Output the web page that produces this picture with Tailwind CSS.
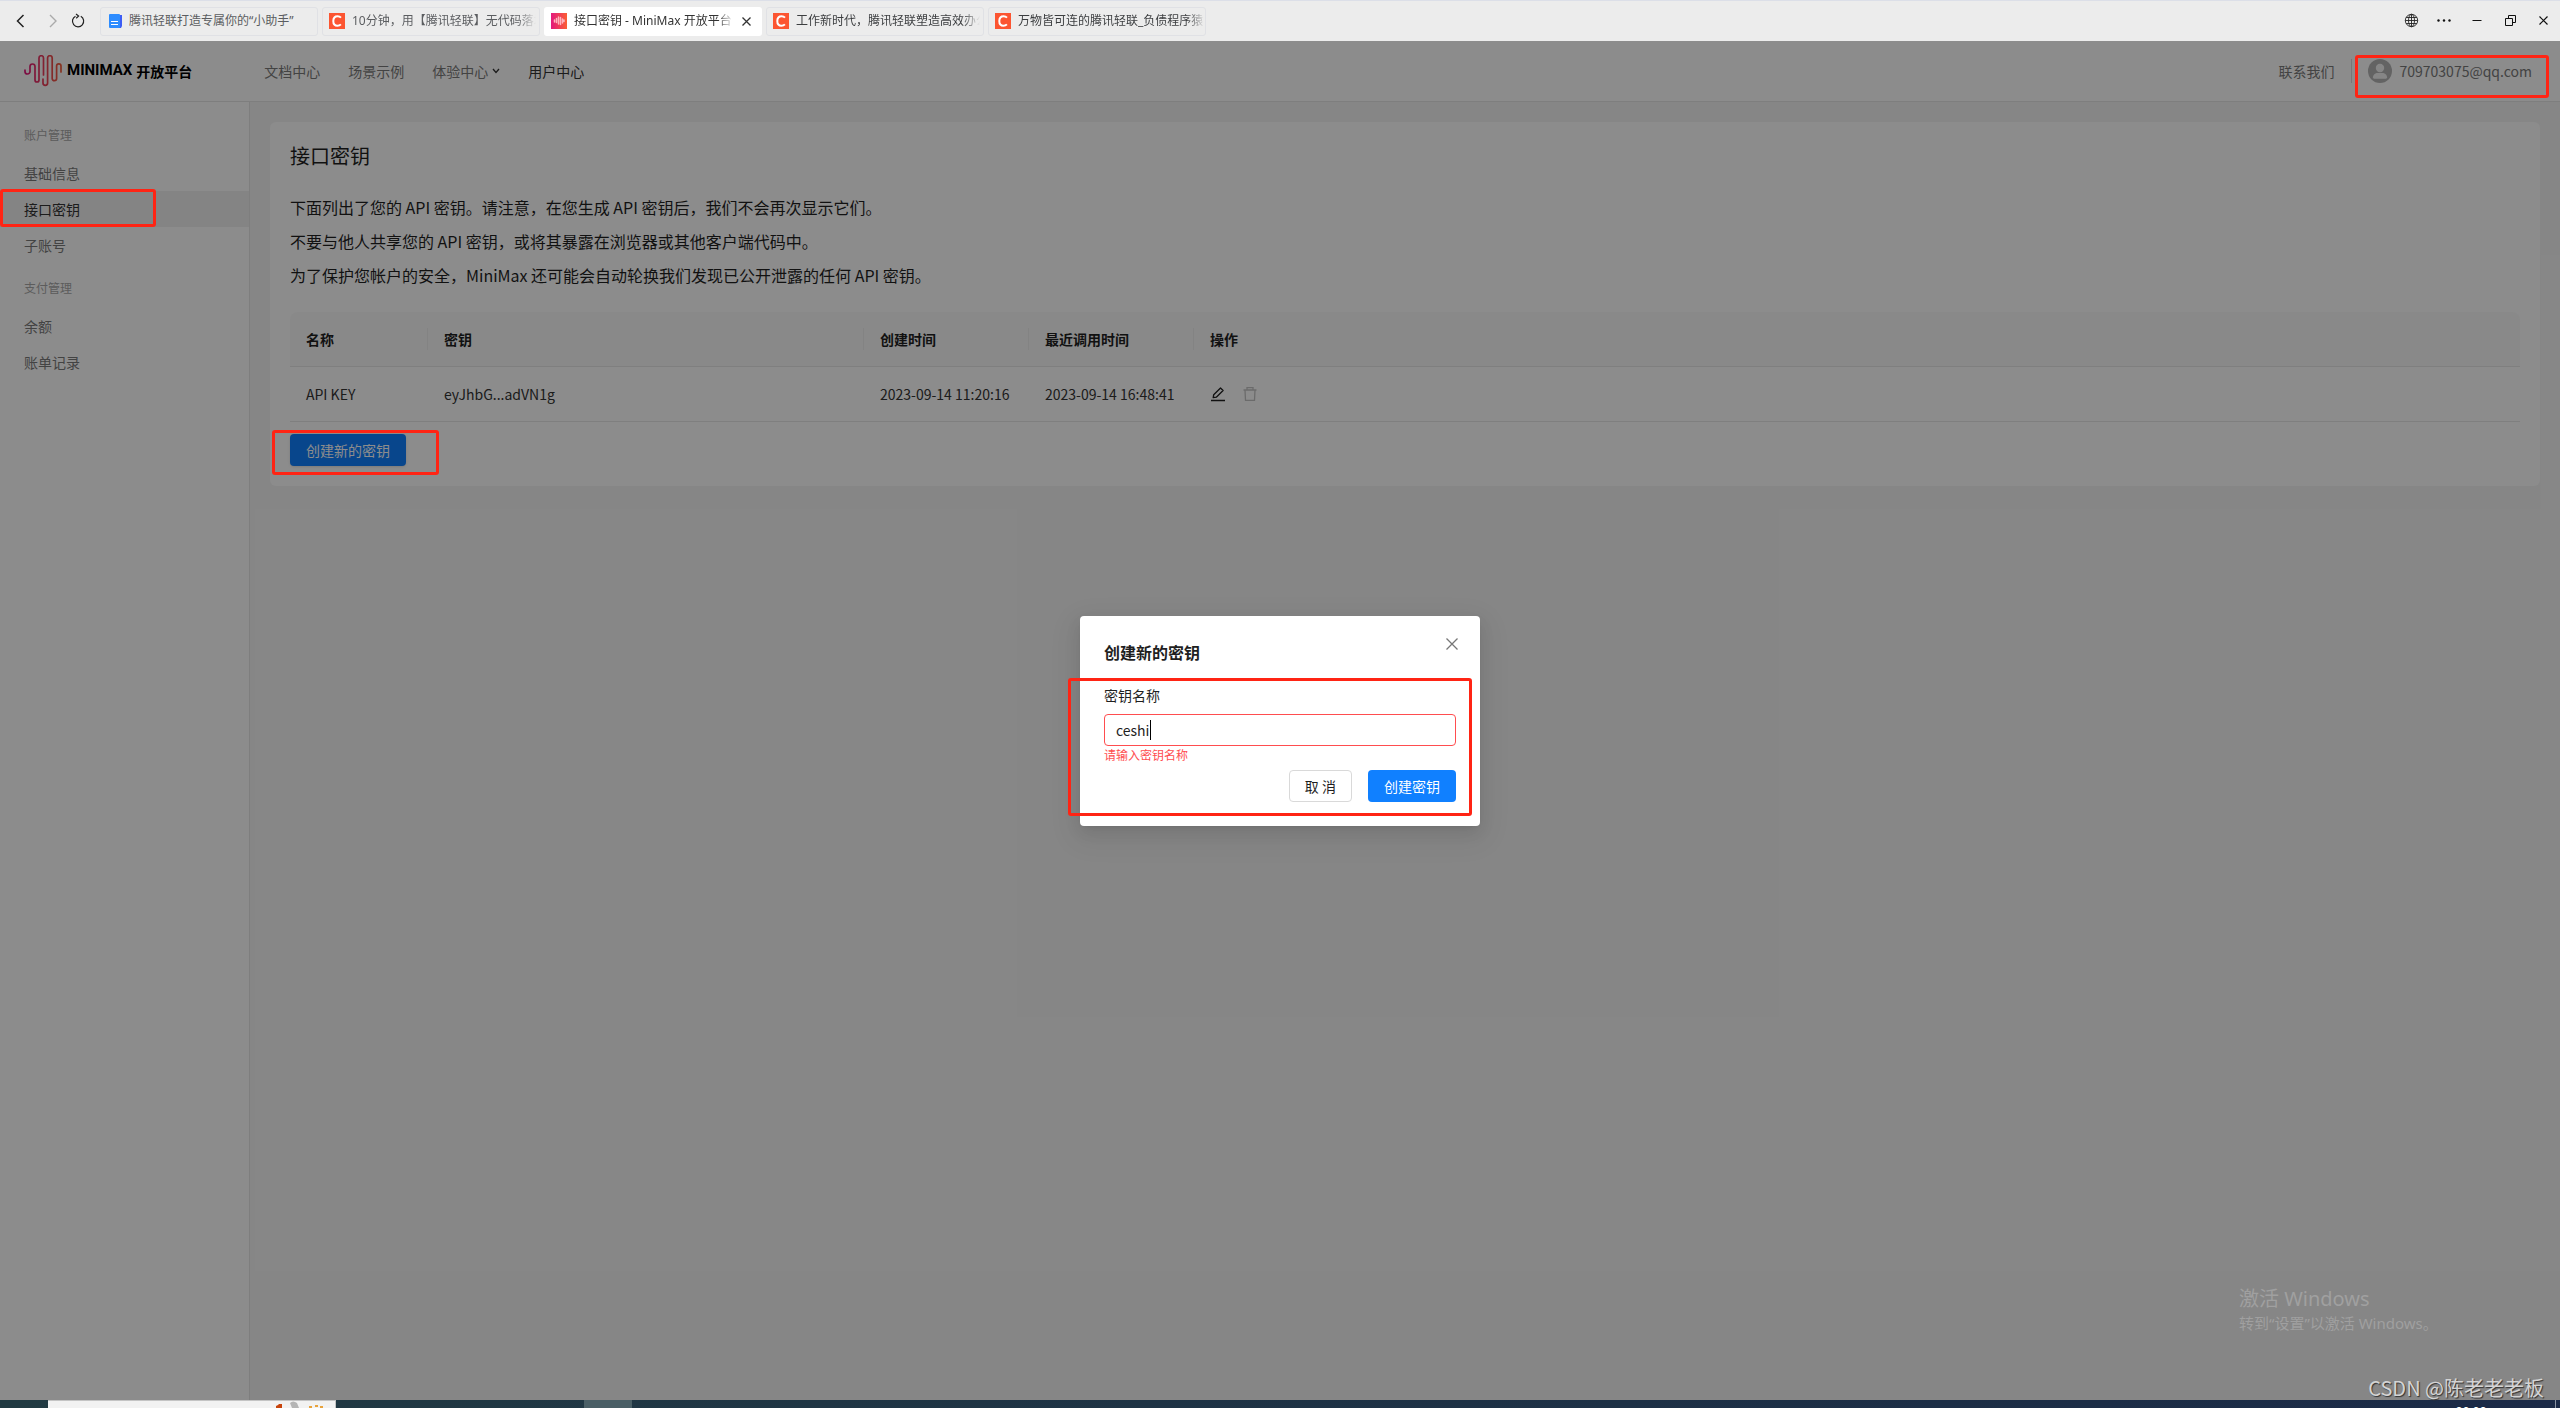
<!DOCTYPE html>
<html lang="zh-CN">
<head>
<meta charset="utf-8">
<meta name="viewport" content="width=device-width, initial-scale=1">
<title>接口密钥 - MiniMax 开放平台</title>
<script src="https://cdn.jsdelivr.net/npm/@tailwindcss/browser@4"></script>
</head>
<body class="relative flex h-screen flex-col overflow-hidden bg-white font-['Noto_Sans_CJK_SC',sans-serif] text-sm text-[#1f1f1f]">

<svg class="hidden">
  <symbol id="csdn" viewBox="0 0 16 16"><rect width="16" height="16" fill="#fc5531"/><path d="M12 4.6C11 3.6 10 3.2 8.7 3.2 6 3.2 4.3 5.2 4.3 8s1.500 4.800 4.200 4.800c1.400 0 2.500-.5 3.400-1.400" fill="none" stroke="#fff" stroke-width="2"/></symbol>
</svg>

<!-- Browser bar -->
<div class="flex h-[41px] shrink-0 items-center border-t border-[#dcdfe8] bg-[#ececec]">
  <div class="flex w-[100px] shrink-0 items-center pl-3">
    <button aria-label="后退" class="h-4 w-4"><svg viewBox="0 0 16 16" fill="none" stroke="#222" stroke-width="1.500"><path d="M11.500 2 5.500 8l6 6"/></svg></button>
    <button aria-label="前进" class="ml-4 h-4 w-4"><svg viewBox="0 0 16 16" fill="none" stroke="#aaa" stroke-width="1.400"><path d="m6 2 6 6-6 6"/></svg></button>
    <button aria-label="刷新" class="ml-2.5 h-4 w-4"><svg viewBox="0 0 16 16" fill="none" stroke="#222" stroke-width="1.200"><path d="M5.500 3.200a5.600 5.600 0 1 0 5.300.1"/><path d="M6 1l2.600 2L6.200 5.200" /></svg></button>
  </div>
  <div class="flex gap-1 font-['Noto_Sans','Noto_Sans_CJK_SC',sans-serif] text-xs">
    <a href="#" class="flex h-[29px] w-[218px] items-center rounded-[3px] border border-[#e0e1e5] pl-[7px] text-[#5b5d60]">
      <svg class="h-[15px] w-[15px] shrink-0" viewBox="0 0 15 15"><path d="M3 1h11v11l-1 2H4z" fill="#3d5df5"/><rect x="1" y="0" width="11" height="14" rx="1" fill="#2d8cff"/><path d="M3 7.500h7M3 10.500h7" stroke="#fff"/></svg>
      <span class="ml-1.5 w-[180px] overflow-hidden whitespace-nowrap">腾讯轻联打造专属你的“小助手”</span>
    </a>
    <a href="#" class="flex h-[29px] w-[218px] items-center rounded-[3px] border border-[#e0e1e5] pl-1.5 text-[#5b5d60]">
      <svg class="h-4 w-4 shrink-0"><use href="#csdn"/></svg>
      <span class="ml-[7px] w-[184px] overflow-hidden whitespace-nowrap mask-r-from-90%">10分钟，用【腾讯轻联】无代码落地</span>
    </a>
    <a href="#" class="flex h-[29px] w-[218px] items-center rounded-[3px] bg-white pl-[7px] text-[#333]">
      <svg class="h-4 w-4 shrink-0" viewBox="0 0 16 16"><defs><linearGradient id="g1"><stop stop-color="#e3197d"/><stop offset="1" stop-color="#fb5f35"/></linearGradient></defs><rect width="16" height="16" fill="url(#g1)"/><path d="M3.500 7v2M5.500 5.500v4M7.500 4v7M9.500 4.500v7M11.500 6v4M13 7v1.500" stroke="#ffb3bd" stroke-width="1.500" stroke-linecap="round"/></svg>
      <span class="ml-[7px] w-[160px] overflow-hidden whitespace-nowrap mask-r-from-90%">接口密钥 - MiniMax 开放平台</span>
      <svg class="ml-2 h-[9px] w-[9px]" viewBox="0 0 9 9" stroke="#333" stroke-width="1.300"><path d="m.5.5 8 8m0-8-8 8"/></svg>
    </a>
    <a href="#" class="flex h-[29px] w-[218px] items-center rounded-[3px] border border-[#e0e1e5] pl-1.5 text-[#3c3e40]">
      <svg class="h-4 w-4 shrink-0"><use href="#csdn"/></svg>
      <span class="ml-[7px] w-[184px] overflow-hidden whitespace-nowrap mask-r-from-90%">工作新时代，腾讯轻联塑造高效办公</span>
    </a>
    <a href="#" class="flex h-[29px] w-[218px] items-center rounded-[3px] border border-[#e0e1e5] pl-1.5 text-[#3c3e40]">
      <svg class="h-4 w-4 shrink-0"><use href="#csdn"/></svg>
      <span class="ml-[7px] w-[187px] overflow-hidden whitespace-nowrap mask-r-from-90%">万物皆可连的腾讯轻联_负债程序猿</span>
    </a>
  </div>
  <div class="ml-auto flex items-center gap-[17px] pr-[9px]">
    <button aria-label="网络" class="h-4 w-4"><svg viewBox="0 0 16 16" fill="none" stroke="#222" stroke-width=".9"><circle cx="8.500" cy="7.500" r="6.200"/><ellipse cx="8.500" cy="7.500" rx="3" ry="6.200"/><path d="M8.500 1.300v12.400M2.300 7.500h12.400M3.200 4.500h10.600M3.200 10.500h10.600"/></svg></button>
    <button aria-label="更多" class="h-4 w-4"><svg viewBox="0 0 16 16" fill="#111"><circle cx="2.500" cy="7.500" r="1.200"/><circle cx="8" cy="7.500" r="1.200"/><circle cx="13.500" cy="7.500" r="1.200"/></svg></button>
    <button aria-label="最小化" class="h-4 w-4"><svg viewBox="0 0 16 16" stroke="#111"><path d="M3.500 7.500h9"/></svg></button>
    <button aria-label="还原" class="h-4 w-4"><svg viewBox="0 0 16 16" fill="none" stroke="#111"><path d="M3.500 5.500h7v7h-7zM6.500 5.500v-3h7v7h-3"/></svg></button>
    <button aria-label="关闭" class="h-4 w-4"><svg viewBox="0 0 16 16" stroke="#111" stroke-width="1.200"><path d="m4.500 3.500 8 8m0-8-8 8"/></svg></button>
  </div>
</div>

<!-- Application -->
<div class="relative flex min-h-0 flex-1 flex-col">
  <header class="flex h-[61px] shrink-0 items-center border-b border-[#e5e5e5] bg-white pl-6 text-[#7a7a7a]">
    <a href="#" class="flex items-center text-black">
      <svg class="h-8 w-[38px]" viewBox="0 0 38 32" fill="none" stroke="url(#g2)" stroke-width="1.700" stroke-linecap="round"><defs><linearGradient id="g2" x1="0" y1="0" x2="38" y2="0" gradientUnits="userSpaceOnUse"><stop stop-color="#e2167e"/><stop offset="1" stop-color="#f4603b"/></linearGradient></defs><path d="M1 15v1.500a2.500 2.500 0 0 0 5 0V11.500a2.500 2.500 0 0 1 5 0V25a2 2 0 0 0 4 0V3a2 2 0 0 1 4.500 0V20"/><path d="M19 24v4a2.300 2.300 0 0 0 4.600 0V3a2.200 2.200 0 0 1 4.600 0V23.500a2.200 2.200 0 0 0 4.400 0V11a2.200 2.200 0 0 1 4.400 0v6"/></svg>
      <span class="ml-[5px] font-[Roboto,sans-serif] text-[15px] font-bold">MINIMAX</span>
      <span class="ml-1 font-bold">开放平台</span>
    </a>
    <nav class="ml-[72px] flex items-center gap-7">
      <a href="#">文档中心</a>
      <a href="#">场景示例</a>
      <a href="#" class="flex items-center gap-1">体验中心<svg class="h-2 w-2" viewBox="0 0 8 8" fill="none" stroke="#333" stroke-width="1.300"><path d="m1 2 3 3.500L7 2"/></svg></a>
      <a href="#" class="text-[#333]">用户中心</a>
    </nav>
    <div class="ml-auto flex items-center pr-7">
      <a href="#">联系我们</a>
      <span class="ml-4 h-6 w-px bg-[#d9d9d9]"></span>
      <a href="#" class="ml-4 flex items-center gap-2">
        <svg class="h-6 w-6" viewBox="0 0 24 24"><circle cx="12" cy="12" r="12" fill="#b5b5b5"/><circle cx="12" cy="9" r="4.200" fill="#f5f5f5"/><path d="M4.800 18.500c.6-3.500 3-4.500 4.700-4.500h5c1.700 0 4.100 1 4.700 4.500-.4.900-1 1.200-2 1.200H6.800c-1 0-1.600-.3-2-1.200z" fill="#f5f5f5"/></svg>
        709703075@qq.com
      </a>
    </div>
  </header>

  <div class="flex min-h-0 flex-1">
    <aside class="w-[250px] shrink-0 border-r border-[#e5e5e5] bg-white pt-2 text-[#7a7a7a]">
      <h2 class="flex h-[45px] items-center pt-1 pl-6 text-xs text-[#a8a8a8]">账户管理</h2>
      <a href="#" class="flex h-9 items-center pl-6">基础信息</a>
      <a href="#" aria-current="page" class="flex h-9 items-center bg-[#f0f0f0] pl-6 text-[#333]">接口密钥</a>
      <a href="#" class="flex h-9 items-center pl-6">子账号</a>
      <h2 class="flex h-[45px] items-center pt-1 pl-6 text-xs text-[#a8a8a8]">支付管理</h2>
      <a href="#" class="flex h-9 items-center pl-6">余额</a>
      <a href="#" class="flex h-9 items-center pl-6">账单记录</a>
    </aside>

    <main class="min-w-0 flex-1 bg-[#f5f5f5] p-5">
      <section class="rounded-md bg-white p-5">
        <h1 class="text-xl leading-7">接口密钥</h1>
        <div class="my-5 text-base leading-[34px]">
          <p>下面列出了您的 API 密钥。请注意，在您生成 API 密钥后，我们不会再次显示它们。</p>
          <p>不要与他人共享您的 API 密钥，或将其暴露在浏览器或其他客户端代码中。</p>
          <p>为了保护您帐户的安全，MiniMax 还可能会自动轮换我们发现已公开泄露的任何 API 密钥。</p>
        </div>
        <table class="w-full table-fixed border-separate border-spacing-0 text-left leading-[22px]">
          <colgroup><col class="w-[138px]"><col class="w-[436px]"><col class="w-[165px]"><col class="w-[165px]"><col></colgroup>
          <thead class="bg-[#fafafa]">
            <tr>
              <th class="rounded-tl-lg border-b border-[#e8e8e8] py-4 pl-4"><div class="border-r border-[#eee]">名称</div></th>
              <th class="border-b border-[#e8e8e8] py-4 pl-4"><div class="border-r border-[#eee]">密钥</div></th>
              <th class="border-b border-[#e8e8e8] py-4 pl-4"><div class="border-r border-[#eee]">创建时间</div></th>
              <th class="border-b border-[#e8e8e8] py-4 pl-4"><div class="border-r border-[#eee]">最近调用时间</div></th>
              <th class="rounded-tr-lg border-b border-[#e8e8e8] py-4 pl-4">操作</th>
            </tr>
          </thead>
          <tbody class="text-[#333]">
            <tr>
              <td class="border-b border-[#e8e8e8] py-4 pl-4">API KEY</td>
              <td class="border-b border-[#e8e8e8] py-4 pl-4">eyJhbG...adVN1g</td>
              <td class="border-b border-[#e8e8e8] py-4 pl-4">2023-09-14 11:20:16</td>
              <td class="border-b border-[#e8e8e8] py-4 pl-4">2023-09-14 16:48:41</td>
              <td class="border-b border-[#e8e8e8] py-4 pl-4">
                <div class="flex h-[22px] items-center gap-4">
                  <button aria-label="编辑" class="h-4 w-4"><svg viewBox="0 0 16 16" fill="none" stroke="#1f1f1f" stroke-width="1.300"><path d="M1 14.500h14" stroke-width="1.500"/><path d="m3.200 11.700.5-3L10.500 2l2.600 2.500-6.800 6.700z" stroke-linejoin="round"/></svg></button>
                  <button aria-label="删除" class="h-4 w-4"><svg viewBox="0 0 16 16" fill="none" stroke="#c4c4c4" stroke-width="1.300"><path d="M1.500 4h13M3 4l.5 10.400h9L13 4M5 4V1.600h6V4"/></svg></button>
                </div>
              </td>
            </tr>
          </tbody>
        </table>
        <button class="mt-3 block h-8 rounded bg-[#1080ff] px-4 text-white shadow-sm">创建新的密钥</button>
      </section>
    </main>
  </div>

  <!-- Dialog -->
  <div class="absolute inset-0 flex items-center justify-center bg-black/45">
    <form role="dialog" aria-labelledby="dlg-title" class="relative w-[400px] rounded bg-white p-6 shadow-[0_6px_16px_rgba(0,0,0,0.08),0_9px_28px_8px_rgba(0,0,0,0.05),0_3px_6px_-4px_rgba(0,0,0,0.12)]">
      <button type="button" aria-label="关闭" class="absolute top-[22px] right-[22px] h-3 w-3"><svg viewBox="0 0 12 12" stroke="#777" stroke-width="1.300"><path d="m.5.500 11 11m0-11-11 11"/></svg></button>
      <h2 id="dlg-title" class="text-base leading-6 font-bold">创建新的密钥</h2>
      <label for="key-name" class="mt-5 block leading-[22px]">密钥名称</label>
      <div class="relative mt-2">
        <input id="key-name" type="text" value="ceshi" class="block h-8 w-full rounded border border-[#ff4d4f] bg-white px-[11px] outline-none">
        <span class="absolute top-1.5 left-[46px] h-5 w-px bg-black"></span>
      </div>
      <p class="text-xs leading-[18px] text-[#ff4d4f]">请输入密钥名称</p>
      <div class="mt-1.5 flex justify-end gap-4">
        <button type="button" class="h-8 rounded border border-[#d9d9d9] bg-white px-[15px]">取 消</button>
        <button type="submit" class="h-8 rounded bg-[#1080ff] px-4 text-white">创建密钥</button>
      </div>
      <span class="pointer-events-none absolute top-[62px] right-2 -left-3 h-[138px] rounded-[3px] border-3 border-[#ff2414]"></span>
    </form>
  </div>

  <!-- Highlight marks -->
  <span class="pointer-events-none absolute top-[14px] right-[11px] h-[43px] w-[194px] rounded-[3px] border-3 border-[#ff2414]"></span>
  <span class="pointer-events-none absolute top-[148px] left-0 h-[38px] w-[156px] rounded-[3px] border-3 border-[#ff2414]"></span>
  <span class="pointer-events-none absolute top-[389px] left-[272px] h-[45px] w-[167px] rounded-[3px] border-3 border-[#ff2414]"></span>

  <!-- Watermarks -->
  <div class="absolute right-[122px] bottom-[67px] w-[199px] font-['Noto_Sans','Noto_Sans_CJK_SC',sans-serif] whitespace-nowrap text-[#a0a0a0]">
    <p class="text-xl leading-7">激活 Windows</p>
    <p class="text-[15px] leading-5">转到“设置”以激活 Windows。</p>
  </div>
  <p class="absolute right-4 bottom-0 text-xl leading-6 text-[#d4d4d4] [text-shadow:1px_1px_1px_#333]">CSDN @陈老老老板</p>
</div>

<!-- Taskbar -->
<footer class="flex h-2 shrink-0 overflow-hidden bg-linear-to-r from-[#213a42] to-[#1b2a47]">
  <div class="ml-12 h-2 w-72 border-t border-r border-[#c4c4c4] bg-[#f2f2f2]">
    <svg class="ml-[226px] h-[7px] w-[50px]" viewBox="0 0 50 7"><path d="M2 7V5l2-1 1-1h3v4z" fill="#c8440c"/><path d="M16 2q3-3 7 0l2 5h-7z" fill="#b5b5b5"/><path d="M35 6h3M41 5h3M46 6h3" stroke="#e8a33c" stroke-width="2"/></svg>
  </div>
  <div class="ml-[248px] h-2 w-12 bg-[#4a5f66]"></div>
  <div class="mr-1 ml-auto flex">
    <time class="mr-[69px] block pt-[3px] text-xs leading-4 text-white">20:06</time>
    <span class="h-2 w-px bg-[#8a93a3]"></span>
  </div>
</footer>
</body>
</html>
